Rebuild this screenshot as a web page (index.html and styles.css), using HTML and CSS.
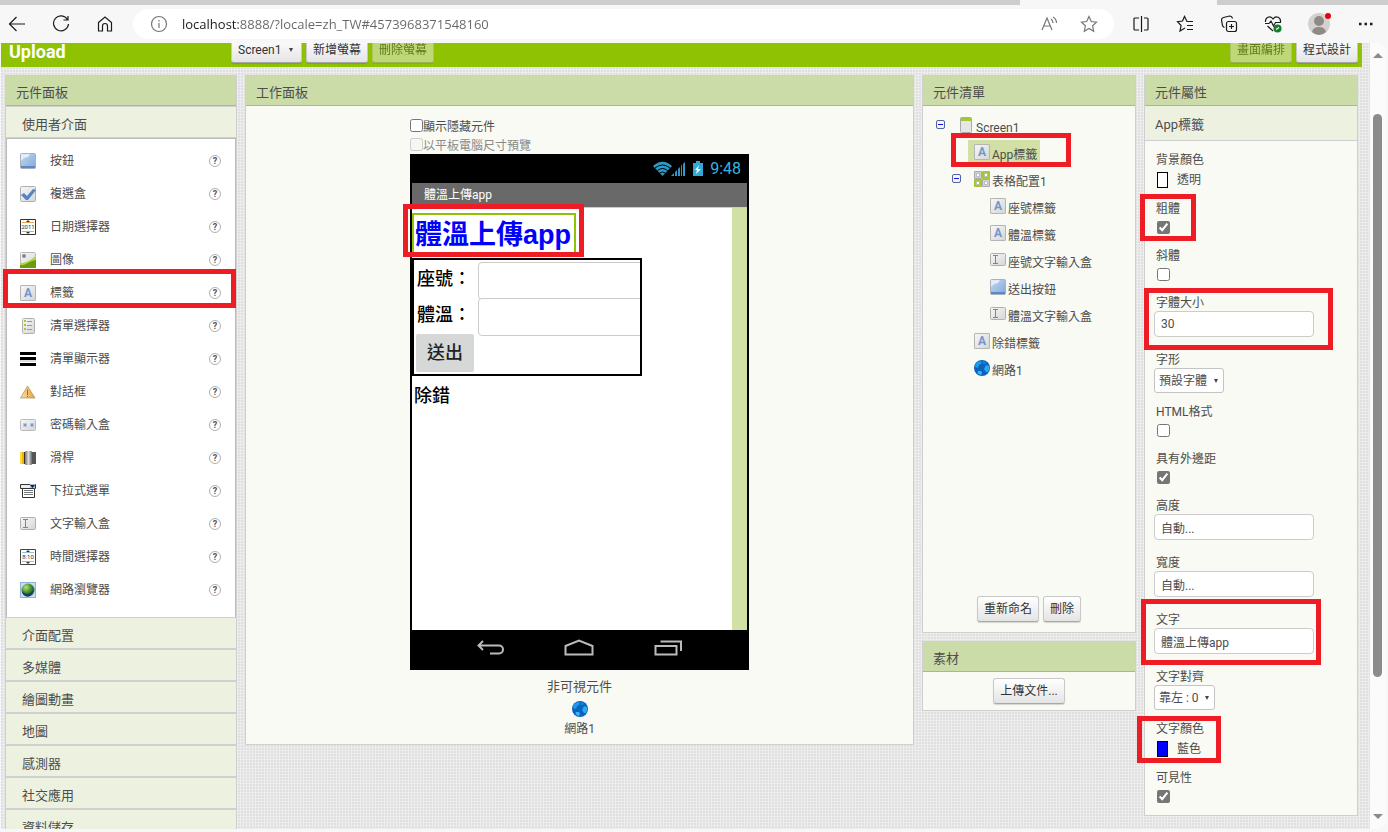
FILE: index.html
```html
<!DOCTYPE html>
<html lang="zh-TW">
<head>
    <meta charset="UTF-8">
    <meta name="viewport" content="width=device-width, initial-scale=1.0">
    <title>Upload</title>
    <link rel="stylesheet" href="styles.css">
</head>
<body>
    <!-- shared icons -->
    <svg class="sprite" aria-hidden="true">
        <defs>
            <linearGradient id="g-blue" x1="0" y1="0" x2="1" y2="1"><stop offset="0" stop-color="#c3d7f0"/><stop offset="1" stop-color="#83a9db"/></linearGradient>
            <linearGradient id="g-grey" x1="0" y1="0" x2="1" y2="1"><stop offset="0" stop-color="#f7f7f7"/><stop offset="1" stop-color="#d6d6d6"/></linearGradient>
            <linearGradient id="g-warn" x1="0" y1="0" x2="1" y2="0"><stop offset="0" stop-color="#fbe0a4"/><stop offset="1" stop-color="#e9a13b"/></linearGradient>
            <linearGradient id="g-knob" x1="0" y1="0" x2="1" y2="0"><stop offset="0" stop-color="#777"/><stop offset=".5" stop-color="#ddd"/><stop offset="1" stop-color="#666"/></linearGradient>
            <radialGradient id="g-earth" cx=".35" cy=".3" r=".8"><stop offset="0" stop-color="#b8e07a"/><stop offset=".5" stop-color="#3f8d2c"/><stop offset="1" stop-color="#123f4a"/></radialGradient>
        </defs>
        <symbol id="i-button" viewBox="0 0 16 16">
            <rect x=".5" y=".5" width="15" height="15" rx="1" fill="url(#g-blue)" stroke="#a9b0ba"/>
            <path d="M1 1h9L8 4 4 5 1 8z" fill="#e3edf9"/><path d="M1 13h14v2H1z" fill="#5c88c6"/>
        </symbol>
        <symbol id="i-check" viewBox="0 0 16 16">
            <rect x=".5" y=".5" width="15" height="15" rx="1" fill="url(#g-grey)" stroke="#b0b0b0"/>
            <path d="M1 9l3-2 3 3 6-7 3 1-8 10H6z" fill="#5784c4"/>
        </symbol>
        <symbol id="i-image" viewBox="0 0 16 16">
            <rect x=".5" y=".5" width="15" height="15" rx="1" fill="url(#g-grey)" stroke="#b8b8b8"/>
            <circle cx="4" cy="4" r="2" fill="#888"/><path d="M0 11c5 0 8-1 16-7v5c-6 3-8 5-16 5z" fill="#b4d43c"/><path d="M0 13c6 1 8-4 16-5v8H0z" fill="#6b9c10"/>
        </symbol>
        <symbol id="i-listpicker" viewBox="0 0 16 16">
            <rect x="2.500" y=".5" width="12" height="15" rx="1" fill="url(#g-grey)" stroke="#b0b0b0"/>
            <path d="M4 2h2v2H4zM4 6h2v2H4zM4 10h2v2H4z" fill="#a4c639"/><path d="M7 3.500h5M7 7.500h5M7 11.500h5" stroke="#999"/>
        </symbol>
        <symbol id="i-listview" viewBox="0 0 16 16"><path d="M0 1h16v3H0zM0 6h16v3H0zM0 12h16v3H0z" fill="#000"/><path d="M0 10h16" stroke="#bbb"/></symbol>
        <symbol id="i-notifier" viewBox="0 0 16 16">
            <path d="M7.500 2L15 14H.5z" fill="url(#g-warn)" stroke="#a98a5a" stroke-width=".7"/><path d="M7.500 5.500V11M7.500 12v1" stroke="#8d6e34"/>
        </symbol>
        <symbol id="i-password" viewBox="0 0 16 16">
            <rect x=".5" y="2.500" width="15" height="11" rx="1" fill="url(#g-grey)" stroke="#bbb"/>
            <path d="M3 8h4M5 6v4M3.500 6.500l3 3M6.500 6.500l-3 3M10 8h4M12 6v4M10.500 6.500l3 3M13.500 6.500l-3 3" stroke="#6d94cd" stroke-width=".8"/>
        </symbol>
        <symbol id="i-slider" viewBox="0 0 16 16">
            <path d="M0 2h5v12H0z" fill="#efb700"/><path d="M0 2h2v12H0z" fill="#fddb3d"/><path d="M11 2h5v12h-5z" fill="#555"/>
            <rect x="5" y="1" width="7" height="14" rx="1" fill="url(#g-knob)"/><path d="M4.500 2v12" stroke="#333"/>
        </symbol>
        <symbol id="i-spinner" viewBox="0 0 16 16">
            <path d="M.5 1.500h15v4H.5z" fill="#eee" stroke="#333"/><path d="M10 1h5v5h-5z" fill="#a9c3ea"/><path d="M10 2h5l-2.500 3z" fill="#123"/>
            <path d="M2.500 5.500h12v9h-12z" fill="#fff" stroke="#333"/><path d="M4 7.500h9M4 9.500h9M4 11.500h9" stroke="#777"/>
        </symbol>
        <symbol id="i-textbox" viewBox="0 0 16 16">
            <rect x=".5" y="1.500" width="15" height="12" rx="1" fill="url(#g-grey)" stroke="#b0b0b0"/>
            <path d="M3 3.500h5M3 11.500h5M5.500 3.500v8" stroke="#7286a8"/>
        </symbol>
        <symbol id="i-webviewer" viewBox="0 0 16 16">
            <rect x=".5" y=".5" width="15" height="15" fill="#c9dcf3" stroke="#8fb1de"/>
            <circle cx="8" cy="8" r="6.500" fill="url(#g-earth)"/><path d="M2 9c3 4 8 4 11-1 0 3-2 6-5 6.500-3 0-6-2-6-5.500z" fill="#153f66"/>
        </symbol>
        <symbol id="i-web" viewBox="0 0 16 16">
            <circle cx="8" cy="8" r="8" fill="#0a63bd"/>
            <path d="M2.500 2.500L6 1l2 1-1 2-2 1-1 3-3-1q0-3 1.500-4.500z" fill="#1c9be8"/>
            <path d="M12 5l3 1q1 3-1 6l-2 0-2-3z" fill="#2ba8ee"/>
            <path d="M4 11l3 0 1 2-1 2q-2-.5-3.500-2z" fill="#3cb6f2"/>
            <path d="M9 1l3 1-1 2-2 0z" fill="#0d86de"/>
        </symbol>
        <symbol id="i-form" viewBox="0 0 16 16">
            <rect x="2.500" y=".5" width="11" height="15" rx="1" fill="#e6e6e6" stroke="#aaa"/><path d="M3 1h10v3H3z" fill="#a4c639"/>
        </symbol>
        <symbol id="i-table" viewBox="0 0 16 16">
            <path d="M.5 .5h7v7h-7zM8.500 8.500h7v7h-7z" fill="#d4d4d4" stroke="#a9a9a9"/>
            <path d="M8.500 .5h7v7h-7zM.5 8.500h7v7h-7z" fill="#a4c639" stroke="#a4c639"/>
            <path d="M2.500 2.500h3v3h-3zM10.500 2.500h3v3h-3zM2.500 10.500h3v3h-3zM10.500 10.500h3v3h-3z" fill="#fff" stroke="#bbb"/>
        </symbol>
        <symbol id="i-minus" viewBox="0 0 9 9"><rect x=".5" y=".5" width="8" height="8" rx="1.500" fill="#f2f4ff" stroke="#5163a3"/><path d="M2 4.500h5" stroke="#1616d8"/></symbol>
    </svg>

    <div class="tab-strip"><div class="tab-active"></div></div>
    <nav class="toolbar">
        <button class="tool" aria-label="Back"><svg width="18" height="18" viewBox="0 0 18 18"><path d="M17 9H1.500M8.500 2L1.500 9l7 7"/></svg></button>
        <button class="tool" aria-label="Refresh"><svg width="18" height="18" viewBox="0 0 18 18"><path d="M15.500 4.500A7.500 7.500 0 1 0 16.500 9M16 1v4h-4.500"/></svg></button>
        <button class="tool" aria-label="Home"><svg width="18" height="18" viewBox="0 0 18 18"><path d="M2.500 7.500L9 2l6.500 5.500V16h-4v-5a2.500 2.500 0 0 0-5 0v5h-4z"/></svg></button>
        <div class="address">
            <svg class="muted" width="18" height="18" viewBox="0 0 18 18"><circle cx="9" cy="9" r="7.500"/><path d="M9 8v5M9 5v1.500"/></svg>
            <input class="url" type="text" aria-label="Address" value="localhost:8888/?locale=zh_TW#4573968371548160">
            <button class="tool" aria-label="Read aloud"><svg class="muted" width="18" height="18" viewBox="0 0 18 18"><path d="M2 15L7 3l5 12M4 11h6M11 4q2 1.500 2 4M13 2q3.500 2 3.500 6"/></svg></button>
            <button class="tool" aria-label="Favorite"><svg class="muted" width="18" height="18" viewBox="0 0 18 18"><path d="M9 1.500l2.300 5 5.200.6-3.900 3.700 1.100 5.400L9 13.500l-4.700 2.700 1.100-5.400L1.500 7.100l5.200-.6z"/></svg></button>
        </div>
        <div class="tools">
            <button class="tool" aria-label="Split"><svg width="18" height="18" viewBox="0 0 18 18"><path d="M7 3H3a1 1 0 0 0-1 1v10a1 1 0 0 0 1 1h4M9.500 1v16M12 3h3a1 1 0 0 1 1 1v10a1 1 0 0 1-1 1h-3"/></svg></button>
            <button class="tool" aria-label="Favorites"><svg width="18" height="18" viewBox="0 0 18 18"><path d="M12 6.500h-1L8.500 1.500 6.500 6l-5 .6 3.600 3.900-1.100 5.500 5-3M11 10.500h6M11 14.500h6M12 6.500h5"/></svg></button>
            <button class="tool" aria-label="Collections"><svg width="18" height="18" viewBox="0 0 18 18"><rect x="6.500" y="6.500" width="10" height="10" rx="2"/><path d="M11.500 9v5M9 11.500h5M4.500 12.500q-1.500-.5-2-2L1.500 5q0-2 2-2.500l6-1.500q2.500 0 3 2.500"/></svg></button>
            <button class="tool" aria-label="Browser essentials"><svg width="18" height="18" viewBox="0 0 18 18"><path d="M1.500 7C1 2.500 6 0 9 4c3-4 8-1.500 7.500 3M1 8.500h4L7 6l2.500 5 2-3.500H17M3.500 11L9 16"/><circle cx="13.500" cy="13.500" r="4" fill="#177c2c" stroke="none"/><path d="M12 14.500l3-2" stroke="#fff"/></svg></button>
            <button class="tool tool-wide" aria-label="Profile"><svg width="24" height="24" viewBox="0 0 24 24"><circle cx="11" cy="12" r="11" fill="#d4d1ce" stroke="none"/><circle cx="11" cy="9" r="5" fill="#8f8a86" stroke="none"/><path d="M4 20q1-5 7-5t7 5q-7 6-14 0z" fill="#8f8a86" stroke="none"/><circle cx="20" cy="4" r="3" fill="#e8000c" stroke="none"/></svg></button>
            <button class="tool" aria-label="More"><svg width="18" height="18" viewBox="0 0 18 18"><path d="M1 9h2.500M6.500 9H9M12 9h2.500" stroke-width="2.500"/></svg></button>
        </div>
    </nav>

    <div class="viewport">
        <div class="page">
            <header class="project-bar">
                <h1>Upload</h1>
                <div class="screens">
                    <span class="select select-button"><select aria-label="Screen"><option>Screen1</option></select></span>
                    <button class="btn">新增螢幕</button>
                    <button class="btn" disabled>刪除螢幕</button>
                </div>
                <div class="views">
                    <button class="btn" disabled>畫面編排</button>
                    <button class="btn">程式設計</button>
                </div>
            </header>

            <main class="columns">
                <section class="panel">
                    <h2>元件面板</h2>
                    <button class="category">使用者介面</button>
                    <ul class="palette">
                        <li><svg class="icon"><use href="#i-button"/></svg><span>按鈕</span><button class="help" aria-label="說明">?</button></li>
                        <li><svg class="icon"><use href="#i-check"/></svg><span>複選盒</span><button class="help" aria-label="說明">?</button></li>
                        <li>
                            <svg class="icon" viewBox="0 0 16 16">
                                <path d="M.5 .5h15v15H.5z" fill="#fff" stroke="#333"/><path d="M2 3.500h12M2 12.500h12" stroke="#e9a35a"/>
                                <path d="M6 3l2-2 2 2zM6 13h4l-2 2z" fill="#333"/><text x="8" y="10" class="tiny-text">2011</text>
                            </svg>
                            <span>日期選擇器</span><button class="help" aria-label="說明">?</button>
                        </li>
                        <li><svg class="icon"><use href="#i-image"/></svg><span>圖像</span><button class="help" aria-label="說明">?</button></li>
                        <li><b class="icon letter">A</b><span>標籤</span><button class="help" aria-label="說明">?</button><i class="mark mark-palette"></i></li>
                        <li><svg class="icon"><use href="#i-listpicker"/></svg><span>清單選擇器</span><button class="help" aria-label="說明">?</button></li>
                        <li><svg class="icon"><use href="#i-listview"/></svg><span>清單顯示器</span><button class="help" aria-label="說明">?</button></li>
                        <li><svg class="icon"><use href="#i-notifier"/></svg><span>對話框</span><button class="help" aria-label="說明">?</button></li>
                        <li><svg class="icon"><use href="#i-password"/></svg><span>密碼輸入盒</span><button class="help" aria-label="說明">?</button></li>
                        <li><svg class="icon"><use href="#i-slider"/></svg><span>滑桿</span><button class="help" aria-label="說明">?</button></li>
                        <li><svg class="icon"><use href="#i-spinner"/></svg><span>下拉式選單</span><button class="help" aria-label="說明">?</button></li>
                        <li><svg class="icon"><use href="#i-textbox"/></svg><span>文字輸入盒</span><button class="help" aria-label="說明">?</button></li>
                        <li>
                            <svg class="icon" viewBox="0 0 16 16">
                                <path d="M.5 .5h15v15H.5z" fill="#fff" stroke="#444"/><path d="M2 3.500h12M2 12.500h12" stroke="#8fc0d8"/>
                                <path d="M6 3l2-2 2 2zM6 13h4l-2 2z" fill="#333"/><text x="8" y="10" class="tiny-text">8:10</text>
                            </svg>
                            <span>時間選擇器</span><button class="help" aria-label="說明">?</button>
                        </li>
                        <li><svg class="icon"><use href="#i-webviewer"/></svg><span>網路瀏覽器</span><button class="help" aria-label="說明">?</button></li>
                    </ul>
                    <button class="category">介面配置</button>
                    <button class="category">多媒體</button>
                    <button class="category">繪圖動畫</button>
                    <button class="category">地圖</button>
                    <button class="category">感測器</button>
                    <button class="category">社交應用</button>
                    <button class="category">資料儲存</button>
                </section>

                <section class="panel">
                    <h2>工作面板</h2>
                    <div class="designer">
                        <div class="option"><input type="checkbox" id="show-hidden"><label for="show-hidden">顯示隱藏元件</label></div>
                        <div class="option"><input type="checkbox" id="tablet" disabled><label for="tablet">以平板電腦尺寸預覽</label></div>
                        <div class="phone">
                            <div class="phone-status">
                                <svg width="52" height="16" viewBox="0 0 52 16">
                                    <path d="M0 5Q9.500-3.500 19 5L9.500 15z" fill="#2b9cc9"/>
                                    <path d="M2 7q7.500-6 15 0M4.500 9.500q5-4 10 0M6.500 12q3-2 6 0" fill="none" stroke="#000"/>
                                    <path d="M18 15l3-3v3zM22 15v-4l2-2v6zM25 15V8l2-2v9zM28 15V5l1-1.500V15zM30 15V3l2-2v14z" fill="#2b9cc9"/>
                                    <path d="M40 2h3V0h4v2h3v13H40z" fill="#2fa9d6"/><path d="M46 4l-4 5h2l-1 4 5-5h-3z" fill="#fff"/>
                                </svg>
                                <span>9:48</span>
                            </div>
                            <div class="phone-title">體溫上傳app</div>
                            <div class="phone-body">
                                <div class="form">
                                    <div class="app-label">體溫上傳app<i class="mark mark-app"></i></div>
                                    <div class="arrangement">
                                        <label for="seat">座號：</label><input type="text" id="seat">
                                        <label for="temp">體溫：</label><input type="text" id="temp">
                                        <button>送出</button>
                                    </div>
                                    <div class="debug">除錯</div>
                                </div>
                            </div>
                            <div class="phone-nav">
                                <svg width="28" height="18" viewBox="0 0 28 18"><path d="M6 2L1.500 6.500 6 11M2 6.500h20a4 4 0 0 1 0 8H13"/></svg>
                                <svg width="30" height="18" viewBox="0 0 30 18"><path d="M1.500 15.500V7L15 1.500 28.500 7v8.500z"/></svg>
                                <svg width="28" height="18" viewBox="0 0 28 18"><path d="M1.500 7h21v8.500h-21zM6.500 2.500h20.500V12"/></svg>
                            </div>
                        </div>
                        <h3>非可視元件</h3>
                        <svg class="icon"><use href="#i-web"/></svg>
                        <span class="nonvisible">網路1</span>
                    </div>
                </section>

                <div class="stack">
                    <section class="panel">
                        <h2>元件清單</h2>
                        <ul class="tree">
                            <li>
                                <div class="node"><button class="toggle" aria-label="收合"><svg><use href="#i-minus"/></svg></button><a href="#"><svg class="icon"><use href="#i-form"/></svg><span>Screen1</span></a></div>
                                <ul>
                                    <li class="node"><a class="selected" href="#"><b class="icon letter">A</b><span>App標籤</span></a><i class="mark mark-tree"></i></li>
                                    <li>
                                        <div class="node"><button class="toggle" aria-label="收合"><svg><use href="#i-minus"/></svg></button><a href="#"><svg class="icon"><use href="#i-table"/></svg><span>表格配置1</span></a></div>
                                        <ul>
                                            <li class="node"><a href="#"><b class="icon letter">A</b><span>座號標籤</span></a></li>
                                            <li class="node"><a href="#"><b class="icon letter">A</b><span>體溫標籤</span></a></li>
                                            <li class="node"><a href="#"><svg class="icon"><use href="#i-textbox"/></svg><span>座號文字輸入盒</span></a></li>
                                            <li class="node"><a href="#"><svg class="icon"><use href="#i-button"/></svg><span>送出按鈕</span></a></li>
                                            <li class="node"><a href="#"><svg class="icon"><use href="#i-textbox"/></svg><span>體溫文字輸入盒</span></a></li>
                                        </ul>
                                    </li>
                                    <li class="node"><a href="#"><b class="icon letter">A</b><span>除錯標籤</span></a></li>
                                    <li class="node"><a href="#"><svg class="icon"><use href="#i-web"/></svg><span>網路1</span></a></li>
                                </ul>
                            </li>
                        </ul>
                        <div class="actions actions-tree">
                            <button class="btn">重新命名</button>
                            <button class="btn">刪除</button>
                        </div>
                    </section>
                    <section class="panel">
                        <h2>素材</h2>
                        <div class="actions"><button class="btn">上傳文件...</button></div>
                    </section>
                </div>

                <section class="panel">
                    <h2>元件屬性</h2>
                    <h3 class="component-name">App標籤</h3>
                    <form class="properties">
                        <div class="prop"><label for="bg">背景顏色</label><button type="button" class="color" id="bg"><i class="swatch"></i>透明</button></div>
                        <div class="prop"><label for="bold">粗體</label><input type="checkbox" id="bold" checked><i class="mark mark-bold"></i></div>
                        <div class="prop"><label for="italic">斜體</label><input type="checkbox" id="italic"></div>
                        <div class="prop"><label for="size">字體大小</label><input type="text" id="size" value="30"><i class="mark mark-size"></i></div>
                        <div class="prop"><label for="typeface">字形</label><span class="select"><select id="typeface"><option>預設字體</option></select></span></div>
                        <div class="prop"><label for="html">HTML格式</label><input type="checkbox" id="html"></div>
                        <div class="prop"><label for="margins">具有外邊距</label><input type="checkbox" id="margins" checked></div>
                        <div class="prop"><label for="height">高度</label><input type="text" id="height" value="自動..."></div>
                        <div class="prop"><label for="width">寬度</label><input type="text" id="width" value="自動..."></div>
                        <div class="prop"><label for="text">文字</label><input type="text" id="text" value="體溫上傳app"><i class="mark mark-text"></i></div>
                        <div class="prop"><label for="align">文字對齊</label><span class="select"><select id="align"><option>靠左 : 0</option></select></span></div>
                        <div class="prop"><label for="color">文字顏色</label><button type="button" class="color" id="color"><i class="swatch swatch-blue"></i>藍色</button><i class="mark mark-color"></i></div>
                        <div class="prop"><label for="visible">可見性</label><input type="checkbox" id="visible" checked></div>
                    </form>
                </section>
            </main>
        </div>
        <div class="scrollbar"><i class="arrow-up"></i><div class="thumb"></div><i class="arrow-down"></i></div>
    </div>
</body>
</html>
```
FILE: styles.css
```css
* {
    box-sizing: border-box;
}
body {
    margin: 0;
    height: 100vh;
    display: flex;
    flex-direction: column;
    overflow: hidden;
    background-color: #f7f7f7;
    color: #4d4d4d;
    font-family: Roboto, "Noto Sans CJK TC", sans-serif;
    font-size: 12px;
    line-height: 16px;
}
h1, h2, h3, ul {
    margin: 0;
    padding: 0;
}
ul {
    list-style: none;
}
button, input, select {
    margin: 0;
    padding: 0;
    font: inherit;
    color: inherit;
}
svg {
    display: block;
    flex: none;
}
.sprite {
    position: absolute;
    width: 0;
    height: 0;
}
.icon {
    flex: none;
    width: 16px;
    height: 16px;
}
.letter {
    border: 1px solid #b5b5b5;
    border-radius: 1px;
    background: linear-gradient(135deg, #f7f7f7, #d6d6d6);
    color: #7197cf;
    font-size: 12px;
    line-height: 14px;
    text-align: center;
}
.tiny-text {
    font: 6px Roboto, sans-serif;
    fill: #333;
    text-anchor: middle;
}

/* browser chrome */
.tab-strip {
    flex: none;
    height: 5px;
    padding-right: 171px;
    background-color: #cdcdcd;
}
.tab-active {
    width: 197px;
    height: 5px;
    margin-left: auto;
    background-color: #f7f7f7;
}
.toolbar {
    flex: none;
    display: flex;
    align-items: center;
    height: 38px;
    padding: 0 12px 0 8px;
    gap: 26px;
}
.tool {
    width: 18px;
    border: none;
    background: none;
}
.tool-wide {
    width: 24px;
}
.toolbar svg {
    fill: none;
    stroke: #1b1b1b;
    stroke-width: 1.2;
}
.toolbar .muted {
    stroke: #767676;
}
.address {
    flex: 1;
    display: flex;
    align-items: center;
    gap: 22px;
    height: 30px;
    margin-left: -7px;
    padding: 0 16px 0 17px;
    border-radius: 15px;
    background-color: #fff;
}
.url {
    flex: 1;
    min-width: 0;
    height: 24px;
    margin-left: -8px;
    border: none;
    outline: none;
    font-family: "Open Sans", sans-serif;
    font-size: 13px;
    color: transparent;
    background: linear-gradient(to right, #1b1b1b 56px, #666 56px);
    -webkit-background-clip: text;
    background-clip: text;
}
.tools {
    display: flex;
    align-items: center;
    gap: 26px;
    margin-left: -8px;
}
.viewport {
    flex: 1;
    min-height: 0;
    display: flex;
    margin: 0 2px 3px 1px;
    overflow: hidden;
    border-radius: 0 8px 8px 0;
}
.scrollbar {
    flex: none;
    width: 16px;
    display: flex;
    flex-direction: column;
    align-items: center;
    padding: 10px 1px 10px 0;
    background-color: #fbfbfb;
}
.thumb {
    flex: 1;
    width: 9px;
    margin: 56px 0 137px;
    border-radius: 5px;
    background-color: #8b8b8b;
}
.arrow-up, .arrow-down {
    border: 5px solid transparent;
}
.arrow-up {
    border-top: none;
    border-bottom: 5px solid #8b8b8b;
}
.arrow-down {
    border-bottom: none;
    border-top: 5px solid #8b8b8b;
}

/* project bar */
.page {
    flex: 1;
    min-width: 0;
    background-color: #ededed;
    background-image: radial-gradient(circle at 1px 1px, #dfdfdf 1px, transparent 1px);
    background-size: 3px 3px;
}
.project-bar {
    display: flex;
    align-items: flex-end;
    height: 24px;
    margin-right: 8px;
    padding: 0 4px 4px 8px;
    overflow: hidden;
    background-color: #8fc202;
}
h1 {
    width: 222px;
    color: #fff;
    font-size: 18px;
    line-height: 22px;
}
.screens, .views {
    display: flex;
    gap: 4px;
}
.views {
    margin-left: auto;
}
.btn, .select-button select {
    height: 26px;
    padding: 0 6px;
    border: 1px solid #c8c8c8;
    border-bottom-color: #a8a8a8;
    border-radius: 3px;
    background: linear-gradient(#fff, #e4e4e4);
    box-shadow: 0 1px 1px rgba(0, 0, 0, 0.15);
    color: #333;
}
.btn:disabled {
    opacity: 0.5;
    background: #eee;
}
.select {
    position: relative;
    display: inline-block;
}
.select::after {
    content: "";
    position: absolute;
    right: 6px;
    top: 11px;
    border: 2px solid transparent;
    border-top: 4px solid #444;
    border-bottom: none;
    pointer-events: none;
}
.select select {
    appearance: none;
}
.select-button select {
    padding: 0 19px 0 6px;
}
.select-button::after {
    right: 9px;
}

/* panels */
.columns {
    display: grid;
    grid-template-columns: 232px 1fr 214px 214px;
    align-items: start;
    gap: 8px;
    padding: 8px 12px 0 4px;
}
.stack {
    display: grid;
    gap: 8px;
}
.panel {
    border: 1px solid #cfcfcf;
    background-color: #f8faf3;
}
h2 {
    height: 30px;
    padding: 4px 10px 0;
    border-bottom: 1px solid #adb0a5;
    background-color: #cbdca9;
    font-size: 13px;
    font-weight: 400;
    line-height: 26px;
}
.category {
    display: block;
    width: 100%;
    height: 32px;
    padding: 5px 16px 0;
    border: 1px solid #d0d0d0;
    border-width: 1px 0;
    background-color: #edf2e0;
    font-size: 13px;
    line-height: 18px;
    text-align: left;
}
.palette {
    padding: 5px 0 11px;
    border: 1px solid #bbb;
    border-bottom: none;
    background-color: #fff;
}
.palette li {
    position: relative;
    display: flex;
    align-items: center;
    gap: 14px;
    height: 33px;
    padding: 0 14px 0 13px;
}
.help {
    width: 12px;
    height: 12px;
    margin-left: auto;
    border: 1px solid #b0b0b0;
    border-radius: 50%;
    background-color: #fff;
    color: #555;
    font-size: 9px;
    font-weight: bold;
    line-height: 10px;
}

/* designer */
.designer {
    display: flex;
    flex-direction: column;
    align-items: center;
    padding: 10px 0 7px;
}
.option {
    display: flex;
    align-items: center;
    width: 339px;
    height: 19px;
}
.option label {
    padding-top: 2px;
}
input[type="checkbox"] {
    width: 13px;
    height: 13px;
    accent-color: #767676;
}
input:disabled + label {
    color: #8a8a8a;
}
.phone {
    width: 339px;
    padding: 0 2px;
    background-color: #000;
}
.phone-status {
    display: flex;
    align-items: center;
    justify-content: flex-end;
    gap: 5px;
    height: 29px;
    padding-right: 6px;
    color: #33b5e5;
    font-size: 16px;
}
.phone-title {
    height: 25px;
    padding-left: 12px;
    border-bottom: 1px solid #ccc;
    background-color: #696969;
    color: #fff;
    line-height: 25px;
}
.phone-body {
    height: 422px;
    padding-right: 15px;
    background-color: #d2dfa5;
}
.form {
    display: flex;
    flex-direction: column;
    align-items: flex-start;
    height: 100%;
    padding-top: 5px;
    background-color: #fff;
    color: #000;
    font-size: 18px;
    font-weight: 500;
}
.app-label {
    position: relative;
    height: 41px;
    padding: 0 3px 0 1px;
    border: 2px solid #8fc202;
    color: #00f;
    font: bold 27px/40px "Liberation Sans", "Noto Sans CJK TC", sans-serif;
}
.arrangement {
    display: grid;
    grid-template-columns: 61px 170px;
    grid-template-rows: 36px 36px 38px;
    align-items: start;
    width: 230px;
    height: 118px;
    margin-top: 4px;
    padding: 2px;
    border: 2px solid #000;
    overflow: hidden;
}
.arrangement label {
    padding-left: 1px;
    line-height: 34px;
}
.arrangement input {
    height: 38px;
    margin-left: 1px;
    border: 1px solid #ccc;
    border-radius: 4px;
}
.arrangement button {
    width: 58px;
    height: 38px;
    border: none;
    border-radius: 2px;
    background-color: #d5d8d7;
    color: #222;
}
.debug {
    padding: 12px 2px;
}
.phone-nav {
    display: flex;
    align-items: center;
    justify-content: space-around;
    height: 40px;
    padding: 0 35px 4px;
}
.phone-nav svg {
    fill: none;
    stroke: #bbb;
    stroke-width: 2;
}
.designer h3 {
    padding: 9px 0 6px;
    font-size: 13px;
    font-weight: 400;
}
.nonvisible {
    padding-top: 4px;
}

/* component tree */
.tree {
    min-height: 480px;
    padding: 5px 0 0 13px;
}
.tree ul {
    padding-left: 16px;
}
.node {
    position: relative;
    display: flex;
    align-items: center;
    height: 27px;
    padding-left: 16px;
}
.toggle {
    width: 9px;
    height: 9px;
    margin: 0 7px 0 -16px;
    border: none;
    background: none;
}
.toggle svg {
    width: 9px;
    height: 9px;
}
.node a {
    display: flex;
    align-items: center;
    gap: 2px;
    height: 23px;
    padding: 0 3px 0 6px;
    color: inherit;
    text-decoration: none;
}
.node a span {
    padding-top: 6px;
}
.node .selected {
    background-color: #d2dfa5;
}
.actions {
    display: flex;
    justify-content: center;
    gap: 4px;
    padding: 6px;
}
.actions-tree {
    padding: 10px;
}

/* properties */
.component-name {
    padding: 11px 10px 7px;
    border-bottom: 1px solid #d0d0d0;
    background-color: #edf2e0;
    font-size: 13px;
    font-weight: 400;
}
.properties {
    display: flex;
    flex-direction: column;
    gap: 11px;
    padding: 11px 9px 9px;
}
.prop {
    position: relative;
    display: flex;
    flex-direction: column;
    align-items: flex-start;
}
.prop label {
    padding-left: 2px;
}
.prop input[type="checkbox"] {
    margin: 4px 3px 3px;
}
.prop input[type="text"] {
    width: 160px;
    height: 26px;
    margin-bottom: 4px;
    padding: 0 6px;
    border: 1px solid #ccc;
    border-radius: 4px;
    background-color: #fff;
}
.prop select {
    display: block;
    height: 25px;
    padding: 0 15px 0 4px;
    border: 1px solid #c4c4c4;
    border-radius: 3px;
    background-color: #fff;
}
.color {
    display: flex;
    align-items: center;
    gap: 9px;
    height: 22px;
    padding: 2px 3px 0;
    border: none;
    background: none;
}
.swatch {
    width: 11px;
    height: 16px;
    border: 1px solid #000;
    background-color: #fff;
}
.swatch-blue {
    background-color: #00f;
}

/* red highlight frames over the parts to look at */
.mark {
    position: absolute;
    z-index: 1;
    border: 5px solid #ee1c24;
    pointer-events: none;
}
.mark-palette {
    inset: -7px -1px 1px -4px;
}
.mark-app {
    inset: -11px -10px -5px -11px;
}
.mark-tree {
    left: -1px;
    top: -5px;
    width: 120px;
    height: 34px;
}
.mark-bold {
    left: -14px;
    top: -7px;
    width: 56px;
    height: 47px;
}
.mark-size {
    left: -10px;
    top: -7px;
    width: 189px;
    height: 62px;
}
.mark-text {
    left: -13px;
    top: -13px;
    width: 180px;
    height: 66px;
}
.mark-color {
    left: -17px;
    top: -5px;
    width: 84px;
    height: 47px;
}
```
